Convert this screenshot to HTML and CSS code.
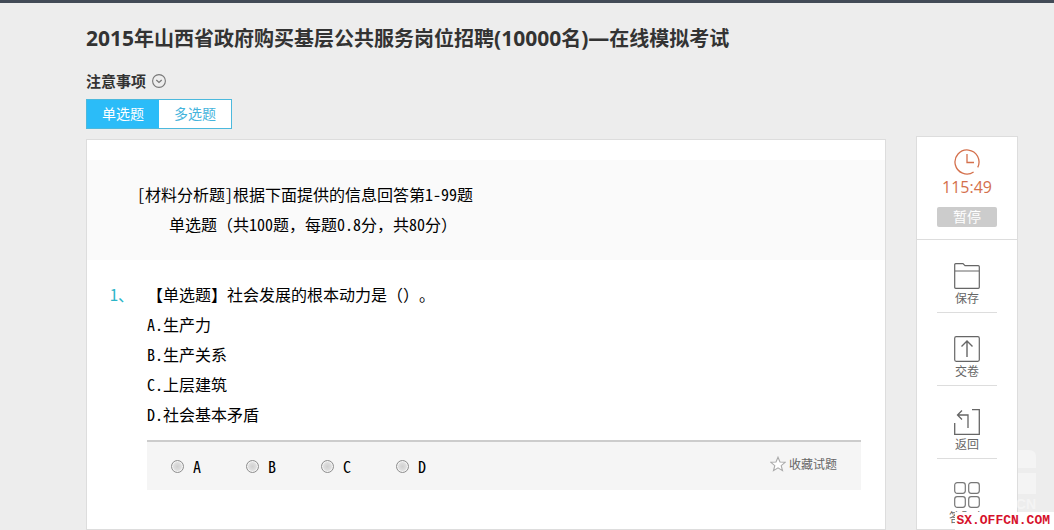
FILE: index.html
```html
<!DOCTYPE html>
<html lang="zh-CN">
<head>
<meta charset="utf-8">
<title>在线模拟考试</title>
<link rel="stylesheet" href="styles.css">
</head>
<body>
<header class="topbar"></header>
<div class="page">
  <h1 class="title"><span class="latin">2015</span>年山西省政府购买基层公共服务岗位招聘<span class="latin">(10000</span>名<span class="latin">)—</span>在线模拟考试</h1>
  <button class="notice" type="button">注意事项
    <svg class="notice-icon" viewBox="0 0 14 14" fill="none" stroke="#777"><circle cx="7" cy="7" r="6.4" stroke-width="1.1"/><path d="M4.3 6l2.7 2.4L9.700 6" stroke-width="1.3"/></svg>
  </button>
  <div class="columns">
    <div class="left">
      <nav class="tabs">
        <button class="tab tab-active" type="button">单选题</button>
        <button class="tab" type="button">多选题</button>
      </nav>
      <main class="paper">
        <section class="intro">
          <p class="intro-line">[材料分析题]根据下面提供的信息回答第1-99题</p>
          <p class="intro-line intro-sub">单选题（共100题，每题0.8分，共80分）</p>
        </section>
        <section class="question">
          <span class="number">1、</span>
          <div class="question-body">
            <p class="stem">【单选题】社会发展的根本动力是（）。</p>
            <p class="option"><span class="letter">A.</span>生产力</p>
            <p class="option"><span class="letter">B.</span>生产关系</p>
            <p class="option"><span class="letter">C.</span>上层建筑</p>
            <p class="option"><span class="letter">D.</span>社会基本矛盾</p>
            <div class="answer">
              <label class="choice"><input class="radio" type="radio" name="q1">A</label>
              <label class="choice"><input class="radio" type="radio" name="q1">B</label>
              <label class="choice"><input class="radio" type="radio" name="q1">C</label>
              <label class="choice"><input class="radio" type="radio" name="q1">D</label>
              <button class="favorite" type="button">
                <svg class="star" viewBox="0 0 16 16" fill="#fff" stroke="#aaa" stroke-width="1.1"><path d="M8 1.200l2 4.800 5.200.3-4 3.300 1.300 5L8 11.900l-4.500 2.700 1.300-5-4-3.300L6 6z"/></svg>收藏试题
              </button>
            </div>
          </div>
        </section>
      </main>
    </div>
    <aside class="side">
      <div class="timer">
        <svg class="icon" viewBox="0 0 26 26" fill="none" stroke="#d4704c" stroke-width="1.300"><path d="M23.700 18.400A12 12 0 1 0 19.600 23M13 5v8.500h7"/></svg>
        <span class="time">115:49</span>
        <button class="pause" type="button">暂停</button>
      </div>
      <div class="tools">
        <button class="tool" type="button">
          <svg class="icon" viewBox="0 0 26 26" fill="none" stroke="#666" stroke-width="1.200"><path d="M.700 8V1.700q0-1 1-1H9l2 2h13.300q1 0 1 1V24.300q0 1-1 1H1.700q-1 0-1-1V8h24.600"/></svg>
          <span>保存</span>
        </button>
        <button class="tool" type="button">
          <svg class="icon" viewBox="0 0 26 26" fill="none" stroke="#666" stroke-width="1.200"><rect x=".7" y=".7" width="24.600" height="24.600" rx="1.500"/><path d="M13 21V5M7.500 10.500L13 5l5.500 5.500" stroke-width="1.400"/></svg>
          <span>交卷</span>
        </button>
        <button class="tool" type="button">
          <svg class="icon" viewBox="0 0 26 26" fill="none" stroke="#666" stroke-width="1.300"><path d="M.700 14v11.300h24.600V.700H18M14 19V6H3.500M8 1.500L3.500 6 8 10.500"/></svg>
          <span>返回</span>
        </button>
        <button class="tool" type="button">
          <svg class="icon" viewBox="0 0 26 26" fill="none" stroke="#777" stroke-width="1.200"><rect x=".7" y=".7" width="10.600" height="10.600" rx="2.500"/><rect x="14.700" y=".7" width="10.600" height="10.600" rx="2.500"/><rect x=".7" y="14.700" width="10.600" height="10.600" rx="2.500"/><rect x="14.700" y="14.700" width="10.600" height="10.600" rx="2.500"/></svg>
          <span>答题卡</span>
        </button>
      </div>
    </aside>
  </div>
</div>
<div class="brand">
  <svg class="brand-mark" viewBox="0 0 18 44" fill="#fff"><path d="M0 0h11q7 0 7 7v11H0zM0 23h18v21H0z"/></svg>
  <span>CN</span>
</div>
<div class="watermark">SX.OFFCN.COM</div>
</body>
</html>
```
FILE: styles.css
```css
* { box-sizing: border-box; }
body {
  margin: 0;
  height: 100vh;
  overflow: hidden;
  display: flex;
  flex-direction: column;
  background: #ededed;
  color: #333;
  font-family: "Open Sans", "Noto Sans CJK SC", sans-serif;
}
p, h1 { margin: 0; }
button { border: 0; padding: 0; background: none; font: inherit; color: inherit; cursor: pointer; }
.topbar { flex: none; height: 3px; background: #434b57; }
.page { flex: 1; min-height: 0; display: flex; flex-direction: column; padding: 20px 36px 0 86px; }
.title { font-size: 20px; line-height: 30px; }
.latin { font-size: 21px; }
.notice {
  display: flex; align-items: center; align-self: flex-start; gap: 6px;
  margin-top: 17px; font-size: 15px; line-height: 20px; font-weight: bold;
}
.notice-icon { width: 14px; height: 14px; }
.columns { flex: 1; min-height: 0; display: flex; gap: 30px; margin-top: 8px; }
.left { flex: 1; display: flex; flex-direction: column; }
.tabs { display: flex; align-self: flex-start; border: 1px solid #4cb9dd; background: #fff; }
.tab { padding: 0 15px; font-size: 14px; line-height: 28px; color: #45b4dc; }
.tab-active { background: #2bbcf8; color: #fff; }
.paper { flex: 1; margin-top: 10px; padding-top: 20px; background: #fff; border: 1px solid #ddd; }
.intro, .question {
  color: #000; font-size: 16px; line-height: 30px;
  font-family: "Noto Sans Mono CJK SC", "Liberation Serif", "Noto Sans CJK SC", serif;
  text-spacing-trim: space-all;
}
.intro { padding: 19px 50px 21px; background: #fafafa; }
.intro-sub { padding-left: 32px; }
.question { display: flex; padding: 19px 24px 0 23px; }
.number { width: 37px; color: #2bb5c8; }
.question-body { flex: 1; }
.option { display: flex; }
.letter { width: 16px; }
.answer {
  display: flex; align-items: center; height: 50px; margin-top: 11px; padding: 0 24px;
  background: #f5f5f5; border-top: 2px solid #ccc;
}
.choice { display: flex; align-items: center; gap: 9px; width: 75px; }
.radio {
  appearance: none; width: 13px; height: 13px; margin: 0;
  border: 1px solid #8e8e8e; border-radius: 50%;
  background: radial-gradient(#d0d0d0, #eee); box-shadow: inset 0 0 0 1px #f4f4f4;
}
.radio:checked { background: #555; }
.favorite {
  display: flex; align-items: center; gap: 3px; margin-left: auto; padding-bottom: 5px;
  color: #666; font: 12px "Noto Sans CJK SC", sans-serif;
}
.star { width: 16px; height: 16px; }
.side {
  flex: none; width: 102px; align-self: stretch; margin-top: 37px;
  background: #fff; border: 1px solid #ddd;
}
.icon { width: 26px; height: 26px; }
.timer {
  display: flex; flex-direction: column; align-items: center;
  padding: 12px 0; border-bottom: 1px solid #ddd; color: #d4704c;
}
.time { font-size: 16px; line-height: 20px; margin: 2px 0 10px; }
.pause { width: 60px; border-radius: 2px; background: #ccc; color: #fff; font-size: 14px; line-height: 20px; }
.tools { display: flex; flex-direction: column; padding: 0 20px; }
.tool {
  display: flex; flex-direction: column; align-items: center;
  height: 73px; padding-top: 23px; border-bottom: 1px solid #ddd;
  color: #666; font-size: 12px; line-height: 20px;
}
.brand {
  position: absolute; right: 18px; bottom: 18px;
  display: flex; flex-direction: column; align-items: flex-end; gap: 2px;
  color: #fff; font: bold 14px/16px "Liberation Sans", sans-serif; opacity: .4;
}
.brand-mark { width: 18px; height: 44px; }
.watermark {
  position: absolute; right: 0; bottom: 0; padding: 0 4px 0 1px;
  background: #fff; color: #d6112b; font: bold 13px/18px "Liberation Mono", monospace;
}
```
